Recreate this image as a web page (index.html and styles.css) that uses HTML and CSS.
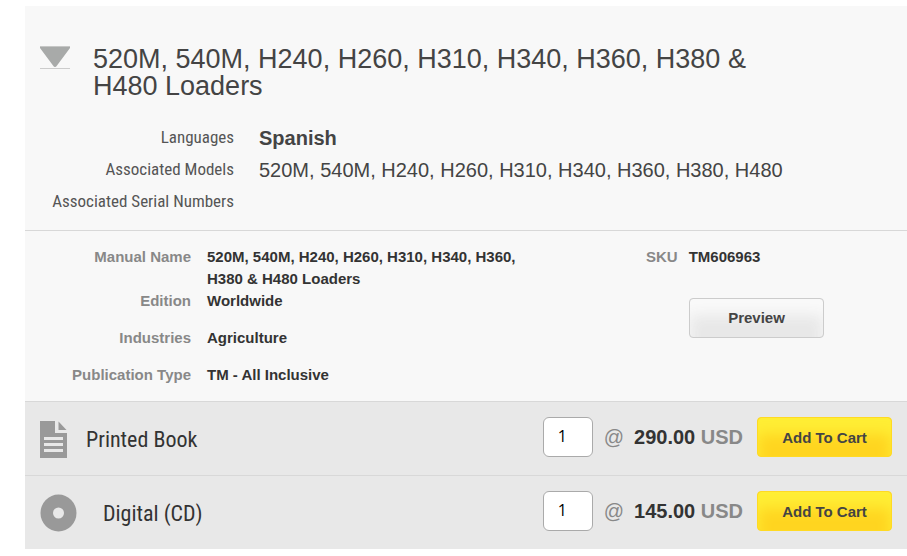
FILE: index.html
```html
<!DOCTYPE html>
<html lang="en">
<head>
<meta charset="utf-8">
<title>520M, 540M, H240 Loaders</title>
<link rel="stylesheet" href="styles.css">
</head>
<body>
<main class="product">
  <header class="summary">
    <button class="toggle" type="button" aria-label="Collapse">
      <svg width="30" height="24" viewBox="0 0 30 24"><path d="M0 0H30V2L17 19.500Q15 22.500 13 19.500L0 2Z" fill="#a8aaa9"/><path d="M0 0H30V1H0Z" fill="#c6c7c6"/><path d="M0 22H30V23H0Z" fill="#ccc"/></svg>
    </button>
    <h1 class="title">520M, 540M, H240, H260, H310, H340, H360, H380 &amp; H480 Loaders</h1>
    <dl class="facts">
      <dt>Languages</dt><dd><strong>Spanish</strong></dd>
      <dt>Associated Models</dt><dd>520M, 540M, H240, H260, H310, H340, H360, H380, H480</dd>
      <dt>Associated Serial Numbers</dt><dd></dd>
    </dl>
  </header>
  <section class="details">
    <dl class="specs">
      <dt>Manual Name</dt><dd>520M, 540M, H240, H260, H310, H340, H360, H380 &amp; H480 Loaders</dd>
      <dt>Edition</dt><dd class="spaced">Worldwide</dd>
      <dt>Industries</dt><dd class="spaced">Agriculture</dd>
      <dt>Publication Type</dt><dd>TM - All Inclusive</dd>
    </dl>
    <div class="side">
      <dl class="sku"><dt>SKU</dt><dd>TM606963</dd></dl>
      <button class="button preview" type="button">Preview</button>
    </div>
  </section>
  <form class="offer">
    <svg class="book-icon" width="27" height="38" viewBox="0 0 27 38"><path d="M0 1H15V13H27V38H0Z" fill="#999"/><path d="M18.500 1.500L26.500 10H18.500Z" fill="#999"/><path d="M4 17H23V20H4ZM4 23H23V26H4ZM4 29H23V32H4Z" fill="#e8e8e8"/></svg>
    <label class="name" for="qty-book">Printed Book</label>
    <input class="qty" id="qty-book" type="text" value="1">
    <span class="at">@</span>
    <span class="price">290.00 <span class="currency">USD</span></span>
    <button class="button cart" type="button">Add To Cart</button>
  </form>
  <form class="offer">
    <svg class="disc-icon" width="37" height="38" viewBox="0 0 37 38"><ellipse cx="18.500" cy="19" rx="18" ry="18.500" fill="#999"/><circle cx="18.500" cy="19" r="5.500" fill="#e8e8e8"/></svg>
    <label class="name" for="qty-disc">Digital (CD)</label>
    <input class="qty" id="qty-disc" type="text" value="1">
    <span class="at">@</span>
    <span class="price">145.00 <span class="currency">USD</span></span>
    <button class="button cart" type="button">Add To Cart</button>
  </form>
</main>
</body>
</html>
```
FILE: styles.css
```css
* { box-sizing: border-box; }
body {
  margin: 6px 0 0 25px;
  background: #fff;
  color: #333;
  font-family: "Liberation Sans", Arial, sans-serif;
}
dl, dd, h1 { margin: 0; }
.product { background: #f8f8f8; }
.summary {
  display: grid;
  grid-template-columns: 53px minmax(0, 1fr);
  padding: 40px 15px 12px;
  color: #444;
}
.toggle {
  width: 30px;
  height: 24px;
  padding: 0;
  border: 0;
  background: none;
}
.toggle svg { display: block; }
.title {
  max-width: 690px;
  font-size: 27px;
  line-height: 27px;
  font-weight: 400;
}
.facts {
  grid-column: 1 / -1;
  display: grid;
  grid-template-columns: 194px minmax(0, 1fr);
  column-gap: 25px;
  grid-auto-rows: 32px;
  margin-top: 22px;
  font-size: 20px;
  line-height: 32px;
}
.facts dt {
  font-family: "Roboto Condensed", "Roboto", sans-serif;
  font-size: 17px;
  line-height: 30px;
  text-align: right;
  color: #555;
}
.details {
  display: flex;
  justify-content: space-between;
  padding: 15px 83px 15px 15px;
  border-top: 1px solid #d8d8d8;
  font-size: 15px;
  line-height: 22px;
  font-weight: 700;
}
.details dt { color: #888; text-align: right; }
.specs {
  display: grid;
  grid-template-columns: 151px 330px;
  column-gap: 16px;
}
.spaced { margin-bottom: 15px; }
.sku { display: flex; gap: 11px; }
.button {
  width: 135px;
  height: 40px;
  border-radius: 4px;
  font: 700 15px "Liberation Sans", Arial, sans-serif;
  color: #444;
}
.side {
  display: flex;
  flex-direction: column;
  align-items: flex-end;
  gap: 30px;
}
.sku { width: 178px; }
.preview {
  padding-bottom: 3px;
  border: 1px solid #ccc;
  background: #e8e8e8;
  box-shadow: inset 0 16px 14px #f9f9f9;
}
.offer {
  display: flex;
  align-items: center;
  height: 74px;
  padding: 0 15px;
  border-top: 1px solid #d8d8d8;
  background: #e8e8e8;
}
.name {
  margin: 0 auto 0 19px;
  padding-top: 2px;
  font-family: "Roboto Condensed", "Roboto", sans-serif;
  font-size: 22px;
}
.disc-icon + .name { margin-left: 26px; }
.qty {
  width: 50px;
  height: 40px;
  margin-bottom: 4px;
  padding: 0 14px 2px;
  border: 1px solid #aaa;
  border-radius: 6px;
  background: #fff;
  color: #000;
  font: 16px "Open Sans", sans-serif;
}
.at {
  margin: 0 10px 2px 11px;
  color: #888;
  font-size: 20px;
}
.price {
  margin-bottom: 2px;
  font-size: 20px;
  font-weight: 700;
}
.currency { color: #888; }
.cart {
  margin: 0 0 4px 14px;
  padding-top: 3px;
  border: 1px solid #ffda23;
  background: #ffd520;
  box-shadow: inset 0 16px 14px #ffee35;
}
```
